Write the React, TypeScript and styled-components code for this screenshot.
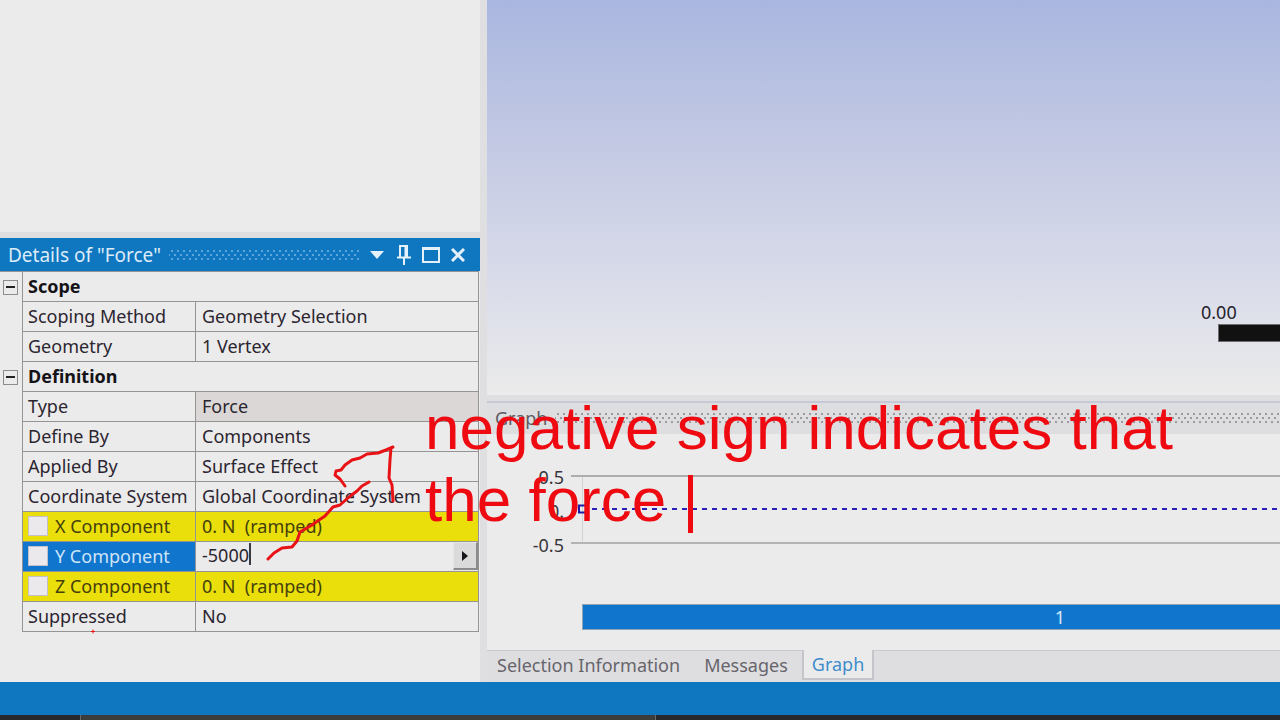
import React, { useState } from "react";
import styled, { createGlobalStyle, css } from "styled-components";

const GlobalStyle = createGlobalStyle`
  *, *::before, *::after { box-sizing: border-box; }
  body {
    margin: 0;
    background: #ebebeb;
    color: #2b2530;
    font-family: "Noto Sans", "Open Sans", sans-serif;
    font-size: 18px;
    line-height: 24px;
  }
  button, input { font: inherit; color: inherit; }
`;

const Window = styled.div`
  position: relative;
  display: flex;
  flex-direction: column;
  min-height: 100vh;
  overflow: hidden;
`;

const Workspace = styled.main`
  flex: 1;
  display: flex;
  background: #dfdfe2;
`;

const Sidebar = styled.aside`
  flex: none;
  width: 37.5%;
  display: flex;
  flex-direction: column;
  gap: 6px;
`;

const OutlinePane = styled.section`
  flex: 1;
  background: #ebebeb;
`;

const DetailsPane = styled.section`
  padding-bottom: 50px;
  background: #ebebeb;
`;

const PaneHeader = styled.header<{ $active?: boolean }>`
  display: flex;
  align-items: center;
  height: 33px;
  gap: 8px;
  padding: 0 12px 0 8px;
  ${(p) =>
    p.$active
      ? css`
          background: #0f76c0;
          color: #dcebf8;
          font-size: 19px;
        `
      : css`
          background: #dedee1;
          border-top: 2px solid #c8c9d6;
          color: #5c5a60;
          padding-right: 0;
          padding-bottom: 2px;
        `}
`;

const PaneTitle = styled.h2`
  margin: 0;
  font-size: inherit;
  font-weight: 400;
  white-space: nowrap;
`;

const Grip = styled.span<{ $color: string }>`
  flex: 1;
  height: 12px;
  background-image: radial-gradient(circle, ${(p) => p.$color} 1px, transparent 1px),
    radial-gradient(circle, ${(p) => p.$color} 1px, transparent 1px);
  background-size: 6px 8px;
  background-position: 0 -2px, 3px 2px;
`;

const HeaderTools = styled.div`
  display: flex;
  gap: 7px;
`;

const ToolButton = styled.button`
  display: grid;
  place-items: center;
  width: 20px;
  height: 24px;
  padding: 0;
  border: 0;
  background: none;
`;

const line = "1px solid #949494";

const PropertyTable = styled.table`
  width: calc(100% - 1px);
  table-layout: fixed;
  border-collapse: separate;
  border-spacing: 0;
  border-top: ${line};
`;

const Gutter = styled.td`
  width: 22px;
  height: 30px;
  padding: 0 0 0 3px;
  line-height: 0;
`;

const cell = css`
  height: 30px;
  padding: 0 5px 2px;
  border-left: ${line};
  border-bottom: ${line};
  font-weight: 400;
  text-align: left;
  white-space: nowrap;
  line-height: 24px;
`;

type Tone = "plain" | "changed" | "selected";

const toneColors: Record<Tone, string> = {
  plain: "transparent",
  changed: "#eadf0b",
  selected: "#1075cd",
};

const GroupCell = styled.th`
  ${cell}
  border-right: ${line};
  font-weight: 700;
  color: #151318;
`;

const NameCell = styled.th<{ $tone: Tone }>`
  ${cell}
  background: ${(p) => toneColors[p.$tone]};
  color: ${(p) => (p.$tone === "selected" ? "#cfe4f7" : p.$tone === "changed" ? "#45400c" : "inherit")};
`;

const ValueCell = styled.td<{ $tone: Tone; $readOnly?: boolean }>`
  ${cell}
  padding: ${(p) => (p.$tone === "selected" ? "0 0 0 6px" : "0 0 2px 6px")};
  white-space: pre;
  border-right: ${line};
  background: ${(p) =>
    p.$readOnly ? "#dad7d6" : p.$tone === "changed" ? toneColors.changed : "transparent"};
  color: ${(p) => (p.$tone === "changed" ? "#45400c" : "inherit")};
`;

const Expander = styled.button`
  display: grid;
  place-items: center;
  width: 15px;
  height: 15px;
  padding: 0;
  border: 1px solid #8d8d8d;
  background: #ebebeb;
`;

const CheckLabel = styled.label`
  display: flex;
  align-items: center;
  gap: 7px;
`;

const CheckBox = styled.input`
  appearance: none;
  width: 20px;
  height: 20px;
  margin: 0;
  border: 1px solid #c3c0cc;
  background: #ebe9ec;
  &:checked { background: #1075cd; }
`;

const Editor = styled.div`
  display: flex;
  align-items: center;
  height: 29px;
  padding-bottom: 1px;
`;

const ValueInput = styled.input`
  width: 47px;
  height: 26px;
  padding: 0 0 2px;
  border: 0;
  outline: 0;
  background: none;
`;

const TextCaret = styled.span`
  width: 2px;
  height: 22px;
  margin-bottom: 4px;
  background: #3a3840;
`;

const FlyoutButton = styled.button`
  display: grid;
  place-items: center;
  width: 25px;
  height: 28px;
  margin-left: auto;
  padding: 0;
  border: solid;
  border-width: 1px 2px 2px 1px;
  border-color: #e6e6e6 #8b8b8b #8b8b8b #e6e6e6;
  background: #dadada;
`;

const Content = styled.div`
  flex: 1;
  min-width: 0;
  margin-left: 7px;
  display: flex;
  flex-direction: column;
`;

const Viewport = styled.section`
  flex: 1;
  display: flex;
  flex-direction: column;
  justify-content: flex-end;
  align-items: flex-end;
  margin-bottom: 6px;
  padding-bottom: 53px;
  background: linear-gradient(#a9b6df 0%, #c4cae4 38%, #dcdeea 76%, #ebebeb 100%);
`;

const ScaleRuler = styled.div`
  width: 79px;
  color: #24222c;
`;

const ScaleBar = styled.div`
  height: 18px;
  margin-left: 17px;
  border: 1px solid #6d6d72;
  border-right: 0;
  background: #111;
`;

const Chart = styled.figure`
  margin: 0;
  padding-bottom: 20px;
  overflow: hidden;
  background: #ebebeb;
`;

const PlotRow = styled.div`
  display: flex;
  gap: 7px;
  height: 170px;
  padding-top: 27px;
`;

const AxisLabels = styled.div`
  width: 77px;
  display: flex;
  flex-direction: column;
  gap: 10px;
  padding-top: 4px;
  text-align: right;
  color: #38363c;
`;

const Plot = styled.svg`
  flex: 1;
  height: 90px;
`;

const StepBar = styled.div`
  width: 120%;
  height: 26px;
  margin-left: 95px;
  border: 1px solid #8fa3b3;
  padding-left: 4px;
  background: #1075cd;
  color: #d5e6f6;
  line-height: 24px;
  text-align: center;
`;

const TabBar = styled.nav`
  display: flex;
  gap: 4px;
  height: 32px;
  border-top: 1px solid #c9c9cf;
  background: #dedee1;
`;

const Tab = styled.button<{ $active?: boolean }>`
  height: 30px;
  margin-top: -1px;
  padding: 0 10px;
  border: 0;
  background: none;
  color: #67656b;
  line-height: 28px;
  ${(p) =>
    p.$active &&
    css`
      padding: 0 8px;
      border: solid #c4c4cb;
      border-width: 0 2px 2px;
      background: #ebebeb;
      color: #3d8dcc;
    `}
`;

const StatusBar = styled.footer`
  height: 33px;
  background: #0f76c0;
`;

const TaskBar = styled.div`
  display: flex;
  height: 5px;
  background: #26282a;
`;

const TaskItem = styled.span`
  width: 45%;
  margin-left: 80px;
  border: solid #6a6a6a;
  border-width: 0 1px;
  background: #3c3c3d;
`;

const InkLayer = styled.svg`
  position: absolute;
  left: 0;
  top: 0;
  width: 100%;
  height: 100%;
  pointer-events: none;
`;

const Note = styled.p`
  position: absolute;
  left: 425px;
  top: 392px;
  margin: 0;
  color: #ee0a10;
  font-family: "Liberation Sans", Arial, sans-serif;
  font-size: 62px;
  line-height: 72px;
  white-space: pre;
`;

const NoteCaret = styled.span`
  display: inline-block;
  width: 5px;
  height: 58px;
  margin-left: 5px;
  vertical-align: -12px;
  background: #ee0a10;
`;

interface Property {
  name: string;
  value: string;
  tone?: Tone;
  readOnly?: boolean;
  checkable?: boolean;
}

const groups: { title: string; rows: Property[] }[] = [
  {
    title: "Scope",
    rows: [
      { name: "Scoping Method", value: "Geometry Selection" },
      { name: "Geometry", value: "1 Vertex" },
    ],
  },
  {
    title: "Definition",
    rows: [
      { name: "Type", value: "Force", readOnly: true },
      { name: "Define By", value: "Components" },
      { name: "Applied By", value: "Surface Effect" },
      { name: "Coordinate System", value: "Global Coordinate System" },
      { name: "X Component", value: "0. N  (ramped)", tone: "changed", checkable: true },
      { name: "Y Component", value: "-5000", tone: "selected", checkable: true },
      { name: "Z Component", value: "0. N  (ramped)", tone: "changed", checkable: true },
      { name: "Suppressed", value: "No" },
    ],
  },
];

function PropertyRow({ name, value, tone = "plain", readOnly, checkable }: Property) {
  const [draft, setDraft] = useState(value);
  return (
    <tr>
      <Gutter />
      <NameCell scope="row" $tone={tone}>
        {checkable ? (
          <CheckLabel>
            <CheckBox type="checkbox" />
            {name}
          </CheckLabel>
        ) : (
          name
        )}
      </NameCell>
      <ValueCell $tone={tone} $readOnly={readOnly}>
        {tone === "selected" ? (
          <Editor>
            <ValueInput aria-label={name} value={draft} onChange={(e) => setDraft(e.target.value)} />
            <TextCaret />
            <FlyoutButton aria-label="More options">
              <svg width="6" height="10" viewBox="0 0 6 10">
                <path d="M0 0 6 5 0 10Z" fill="#17151a" />
              </svg>
            </FlyoutButton>
          </Editor>
        ) : (
          value
        )}
      </ValueCell>
    </tr>
  );
}

export default function App() {
  return (
    <Window>
      <GlobalStyle />
      <Workspace>
        <Sidebar>
          <OutlinePane />
          <DetailsPane>
            <PaneHeader $active>
              <PaneTitle>Details of "Force"</PaneTitle>
              <Grip $color="#5ba5dc" />
              <HeaderTools>
                <ToolButton aria-label="Menu">
                  <svg width="14" height="8" viewBox="0 0 14 8">
                    <path d="M0 0H14L7 8Z" fill="#e4f1fb" />
                  </svg>
                </ToolButton>
                <ToolButton aria-label="Pin">
                  <svg width="14" height="20" viewBox="0 0 14 20" fill="none" stroke="#e4f1fb" strokeWidth="2">
                    <path d="M3 12V1H10V12M8.5 1V12M0 12.500H14M7 12V20" />
                  </svg>
                </ToolButton>
                <ToolButton aria-label="Maximize">
                  <svg width="20" height="18" viewBox="0 0 20 18" fill="none" stroke="#e4f1fb" strokeWidth="2">
                    <path d="M2 2H18V16H2ZM2 3H18" />
                  </svg>
                </ToolButton>
                <ToolButton aria-label="Close">
                  <svg width="14" height="14" viewBox="0 0 14 14" fill="none" stroke="#e4f1fb" strokeWidth="3">
                    <path d="M1 1 13 13M13 1 1 13" />
                  </svg>
                </ToolButton>
              </HeaderTools>
            </PaneHeader>
            <PropertyTable>
              <colgroup>
                <col width="22" />
                <col width="173" />
                <col />
              </colgroup>
              {groups.map((group) => (
                <tbody key={group.title}>
                  <tr>
                    <Gutter>
                      <Expander aria-label={`Collapse ${group.title}`}>
                        <svg width="9" height="2" viewBox="0 0 9 2">
                          <path d="M0 1H9" stroke="#222" strokeWidth="2" />
                        </svg>
                      </Expander>
                    </Gutter>
                    <GroupCell colSpan={2}>{group.title}</GroupCell>
                  </tr>
                  {group.rows.map((row) => (
                    <PropertyRow key={row.name} {...row} />
                  ))}
                </tbody>
              ))}
            </PropertyTable>
          </DetailsPane>
        </Sidebar>
        <Content>
          <Viewport>
            <ScaleRuler>
              0.00
              <ScaleBar />
            </ScaleRuler>
          </Viewport>
          <PaneHeader>
            <PaneTitle>Graph</PaneTitle>
            <Grip $color="#9b9b9f" />
          </PaneHeader>
          <Chart>
            <PlotRow>
              <AxisLabels>
                <span>0.5</span>
                <span>0.</span>
                <span>-0.5</span>
              </AxisLabels>
              <Plot>
                <path d="M11.500 15V82" stroke="#d3d3d6" />
                <line x1="0" x2="100%" y1="15" y2="15" stroke="#adadad" strokeWidth="2" />
                <line x1="0" x2="100%" y1="82" y2="82" stroke="#b4b4b4" strokeWidth="2" />
                <line x1="21" x2="100%" y1="48" y2="48" stroke="#2a20b8" strokeWidth="2" strokeDasharray="5 5" />
                <rect x="8" y="44.500" width="7" height="7" fill="none" stroke="#1c1ca8" strokeWidth="2" />
              </Plot>
            </PlotRow>
            <StepBar>1</StepBar>
          </Chart>
          <TabBar>
            <Tab>Selection Information</Tab>
            <Tab>Messages</Tab>
            <Tab $active>Graph</Tab>
          </TabBar>
        </Content>
      </Workspace>
      <StatusBar />
      <TaskBar>
        <TaskItem />
      </TaskBar>
      <InkLayer fill="none" stroke="#e81216" strokeWidth="3" strokeLinecap="round" strokeLinejoin="round">
        <path d="M345 486 340 479 335 475 336 471 341 470 345 465 352 460 360 458 367 454 378 453 386 450 393 447M391 448 390 460 389 478 392 485 393 501" />
        <path d="M268 559 274 553 282 548 292 547 297 541 300 532 312 525 319 520 325 516 333 507 340 505 349 497 357 491 362 486 369 482" />
        <path d="M91 631.500H95M93 629.500V633.500" strokeWidth="1" strokeLinecap="butt" />
      </InkLayer>
      <Note>
        negative sign indicates that{"\n"}the force <NoteCaret />
      </Note>
    </Window>
  );
}
